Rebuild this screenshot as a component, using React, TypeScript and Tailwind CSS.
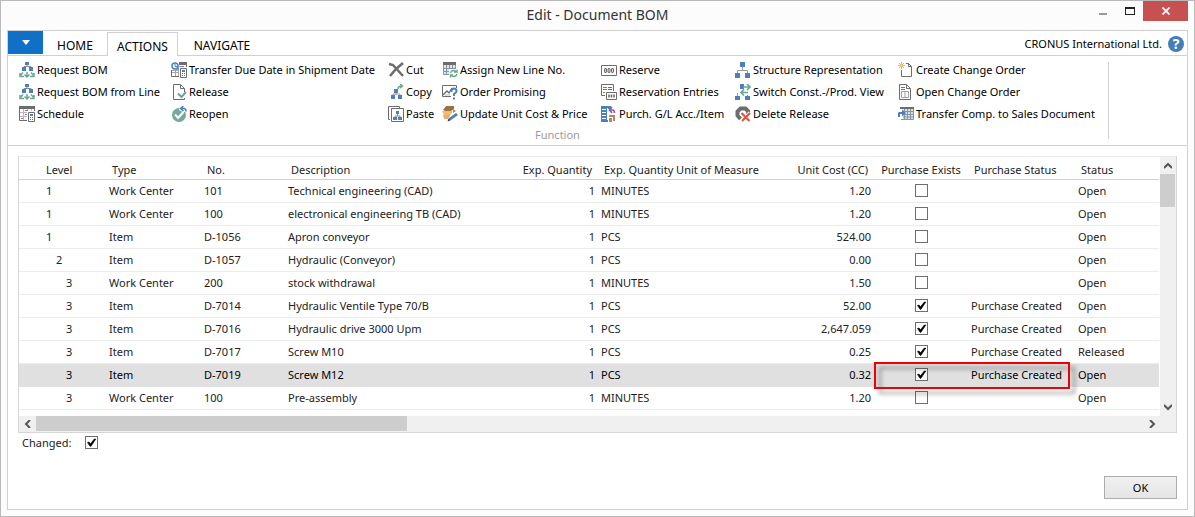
import React from "react";

type IconProps = { children: React.ReactNode; w?: number };

function Svg({ children, w = 16 }: IconProps) {
  return (
    <svg width={w} height="16" viewBox={`0 0 ${w} 16`} fill="none" className="shrink-0" aria-hidden="true">
      {children}
    </svg>
  );
}

const BLUE = "#4a80bd";
const GREEN = "#6aa892";
const GRAY = "#6d6d6d";

const RequestIcon = () => (
  <Svg>
    <path d="M6 0h4v3H6zM3 5h4v4H3zM10 5h4v4h-4z" fill={BLUE} />
    <path d="M8 3v2M5 5V4.500h7V5" stroke="#8b8b8b" />
    <path d="M4 10.500L1 14M8 10v5M12 10.500l3 3.500M1 11v3.500h4M5.500 12.500L8 15l2.500-2.500M15 11v3.500h-4" stroke={GREEN} strokeWidth="1.500" />
  </Svg>
);

const Calculator = () => (
  <>
    <path d="M8 5h8v11H8z" fill="#fff" />
    <path d="M9.500 6.500h6v9h-6z" fill="#fff" stroke={GRAY} />
    <path d="M11 8h3v2h-3z" fill={BLUE} />
    <path d="M11 11.500h1M13 11.500h1M11 13.500h1M13 13.500h1" stroke={GRAY} />
  </>
);

const ScheduleIcon = () => (
  <Svg>
    <path d="M.5 1v13.500H8M15.500 1v4" stroke={GRAY} />
    <path d="M0 0h16v3H0z" fill={GRAY} />
    <path d="M4.500 3v11M8.500 3v3M12.500 3v2M1 6.500h7M1 10.500h7" stroke="#b9b9b9" />
    <path d="M6 4h3v1H6zM2 12h2v1H2zM6 8h2v1H6z" fill="#9a70b5" />
    <Calculator />
  </Svg>
);

const TransferDateIcon = () => (
  <Svg>
    <path d="M.5 8v6.500H8M15.500 1v4" stroke={GRAY} />
    <path d="M8 0h8v3H8z" fill={GRAY} />
    <path d="M4.500 8v6M7.500 7v7M1 10.500h7M1 8.500h7" stroke="#a5a5a5" />
    <path d="M9 4h4v1H9z" fill="#9a70b5" />
    <circle cx="4" cy="4" r="3" fill="#fff" stroke={BLUE} strokeWidth="1.500" />
    <path d="M4 2v2.500h2M5 7h3V4" stroke={BLUE} />
    <Calculator />
  </Svg>
);

const ReleaseIcon = () => (
  <Svg>
    <path d="M13.500 14v1.500h-11V.5h7l4 4V8M9.500.5v4h4" stroke={GRAY} />
    <path d="M6 8h10v6H6z" fill="#fff" />
    <path d="M7 9.500l3.500 3.500L15 8" stroke={GREEN} strokeWidth="2" />
  </Svg>
);

const ReopenIcon = () => (
  <Svg>
    <circle cx="8" cy="9" r="7" fill="#76a998" />
    <path d="M4 8.500l3 3.500 5.500-6" stroke="#fff" strokeWidth="2" />
    <path d="M8 0h8v6h-4L8 4z" fill="#fff" />
    <path d="M12.500 0L9.500 2.500 12.500 5M10 2.500h3q2 0 2 3" stroke={BLUE} strokeWidth="1.500" />
  </Svg>
);

const CutIcon = () => (
  <Svg>
    <path d="M1 2l4 1 10 11M15 1L8 7l-6 7" stroke={GRAY} strokeWidth="2.500" />
  </Svg>
);

const CopyIcon = () => (
  <Svg>
    <path d="M6 5h4v4H6zM3 11h4v4H3zM10 11h4v4h-4z" fill={BLUE} />
    <path d="M8 9v2M5 11v-1h7v1" stroke="#9a9a9a" />
    <path d="M10 5q0-3 4-3M12 0l2.500 2L12 4" stroke={GREEN} strokeWidth="1.500" />
  </Svg>
);

const PasteIcon = () => (
  <Svg>
    <path d="M2 13.500H.5V.5h11V2" stroke={GRAY} />
    <path d="M3.500 2.500h12v13h-12z" fill="#fff" stroke={GRAY} />
    <path d="M8 5h3v3H8zM5 11h4v3H5zM10 11h4v3h-4z" fill={BLUE} />
    <path d="M9.500 8v2M7 11v-1h5v1" stroke="#8b8b8b" />
  </Svg>
);

const AssignIcon = () => (
  <Svg>
    <path d="M1 1h12v12H1z" fill="#e0e6ec" />
    <path d="M1.500 3v9.500H7M4.500 3v9M7.500 3v6M10.500 3v5M13.500 3v4M1 6.500h12M1 9.500h8" stroke="#8694a2" />
    <path d="M1 0h13v3H1z" fill={GRAY} />
    <path d="M7 7h9v9H7z" fill="#fff" />
    <path d="M8.500 11q1-3 4-2.500l2 1.500M15 7.500V10h-3M15 12q-1 3-4 2.500L9 13M8.500 15.500V13H11" stroke={GREEN} strokeWidth="1.400" />
  </Svg>
);

const PromiseIcon = () => (
  <Svg>
    <path d="M9 12.500H.5V1.500h14V4" stroke={GRAY} />
    <path d="M1 11l4-4 2 2 3-5" stroke={GRAY} strokeWidth="1.300" />
    <path d="M3 11h5" stroke="#bbb" />
    <path d="M9.500 8V7q0-2.500 2.500-2.500T14.500 7q0 1.500-2.500 3v2M12 13.500v2" stroke={BLUE} strokeWidth="2" />
  </Svg>
);

const UpdateIcon = () => (
  <Svg>
    <path d="M4 0h8v3l-3 2H3L1 4z" fill="#a07043" />
    <path d="M0 5h10v2L7 9H2z" fill="#f0bd72" />
    <path d="M1 9l8-1-3 5H2z" fill="#e7b068" />
    <path d="M11 3l3 2-3 2z" fill="#bd8751" />
    <path d="M6 15l1-3 7-5 2 2-7 5z" fill={BLUE} />
    <path d="M5.500 15.500l1-3 2 2z" fill="#3e4b59" />
  </Svg>
);

const ReserveIcon = () => (
  <Svg>
    <path d="M.5 3.500h15v10H.5z" stroke={GRAY} />
    <path d="M3 7l1-1h1l1 1v3l-1 1H4l-1-1zM6.500 7l1-1h1l1 1v3l-1 1h-1l-1-1zM10 7l1-1h1l1 1v3l-1 1h-1l-1-1z" fill={GRAY} />
    <path d="M4.500 7v3M8 7v3M11.500 7v3" stroke="#d5d5d5" />
  </Svg>
);

const ReservationIcon = () => (
  <Svg>
    <path d="M4 11.500H.5V.5h12V7" stroke={GRAY} />
    <path d="M2 3.500h4M2 5.500h4M2 8.500h2" stroke="#d35e43" />
    <path d="M7 3.500h4M7 5.500h4" stroke={GRAY} />
    <path d="M5.500 8.500h10v7h-10z" fill="#fff" stroke={GRAY} />
    <path d="M8 10.500v3M10.500 10.500v3M13 10.500v3" stroke={GRAY} strokeWidth="1.600" />
  </Svg>
);

const PurchIcon = () => (
  <Svg>
    <path d="M0 0h10v3H7v13H0z" fill={BLUE} />
    <path d="M1 3.500h4M1 6.500h4M1 9.500h4M1 12.500h4M6.500 2v12" stroke="#fff" />
    <path d="M8 4h3.500q2 0 2 3M11 1L8.500 4 11 7" stroke="#8b60a7" strokeWidth="1.700" />
    <path d="M8 9h6v6h-2v-4H8zM8 12h3v4H8z" fill="#b18762" />
  </Svg>
);

const StructureIcon = () => (
  <Svg>
    <path d="M5 0h5v5H5zM0 11h5v5H0zM10 11h5v5h-5z" fill={BLUE} />
    <path d="M7.500 5v3M2.500 11V8.500h10V11" stroke="#9a9a9a" />
  </Svg>
);

const SwitchIcon = () => (
  <Svg>
    <path d="M5 0h4v5H5zM0 12h5v4H0zM10 12h5v4h-5z" fill={BLUE} />
    <path d="M2.500 12V9M12.500 12v-1" stroke="#9a9a9a" />
    <path d="M8 3h7M12 0l3 3-3 3M6 8.500h7M9 5.500l-3 3 3 3" stroke={GREEN} strokeWidth="1.700" />
  </Svg>
);

const DeleteReleaseIcon = () => (
  <Svg>
    <path d="M13 8V5l-2.500-2.500h-5L2.500 5.500v4L5.500 13" stroke={GRAY} strokeWidth="4" />
    <path d="M6 7l8 8M15 7l-8 8" stroke="#fff" strokeWidth="4" />
    <path d="M6.500 7l8 8M15 7l-8 8" stroke="#df5737" strokeWidth="2.200" />
  </Svg>
);

const CreateIcon = () => (
  <Svg>
    <path d="M8 1.500h2.500l3 3v10h-10V8M10.500 1.500v3h3" stroke={GRAY} />
    <path d="M3.500 0v7M0 3.500h7M1 1l5 5M6 1L1 6" stroke="#e5b567" />
    <path d="M3 3h1v1H3z" fill="#fff" />
  </Svg>
);

const OpenIcon = () => (
  <Svg>
    <path d="M1.500.5h7l4 4v11h-11zM8.500.5v4h4" stroke={GRAY} />
    <path d="M3 3.500h4M3 5.500h4" stroke={BLUE} strokeWidth="1.200" />
    <path d="M3.500 7.500h7v6h-7zM7 8v5" stroke="#a0a0a0" />
  </Svg>
);

const TransferIcon = () => (
  <Svg>
    <path d="M5 3h10v10H5z" fill="#d8e1ea" />
    <path d="M3 13.500h12.500V2.500H3M6.500 2v11M9.500 2v11M12.500 2v11M5 5.500h10M5 8.500h10M5 11h10" stroke="#8795a3" />
    <path d="M2 1h14v2H2z" fill={GRAY} />
    <path d="M0 11V7l1-1h3V3.500L8 7l-4 3.500V8H2v3z" fill={BLUE} />
  </Svg>
);

const ACTION_COLUMNS = [
  [
    ["Request BOM", RequestIcon],
    ["Request BOM from Line", RequestIcon],
    ["Schedule", ScheduleIcon],
  ],
  [
    ["Transfer Due Date in Shipment Date", TransferDateIcon],
    ["Release", ReleaseIcon],
    ["Reopen", ReopenIcon],
  ],
  [
    ["Cut", CutIcon],
    ["Copy", CopyIcon],
    ["Paste", PasteIcon],
  ],
  [
    ["Assign New Line No.", AssignIcon],
    ["Order Promising", PromiseIcon],
    ["Update Unit Cost & Price", UpdateIcon],
  ],
  [
    ["Reserve", ReserveIcon],
    ["Reservation Entries", ReservationIcon],
    ["Purch. G/L Acc./Item", PurchIcon],
  ],
  [
    ["Structure Representation", StructureIcon],
    ["Switch Const.-/Prod. View", SwitchIcon],
    ["Delete Release", DeleteReleaseIcon],
  ],
  [
    ["Create Change Order", CreateIcon],
    ["Open Change Order", OpenIcon],
    ["Transfer Comp. to Sales Document", TransferIcon],
  ],
] as [string, React.FC][][];

type Row = {
  level: 1 | 2 | 3;
  type: string;
  no: string;
  description: string;
  unit: string;
  cost: string;
  purchased?: boolean;
  status: string;
  selected?: boolean;
};

const ROWS: Row[] = [
  { level: 1, type: "Work Center", no: "101", description: "Technical engineering (CAD)", unit: "MINUTES", cost: "1.20", status: "Open" },
  { level: 1, type: "Work Center", no: "100", description: "electronical engineering TB (CAD)", unit: "MINUTES", cost: "1.20", status: "Open" },
  { level: 1, type: "Item", no: "D-1056", description: "Apron conveyor", unit: "PCS", cost: "524.00", status: "Open" },
  { level: 2, type: "Item", no: "D-1057", description: "Hydraulic (Conveyor)", unit: "PCS", cost: "0.00", status: "Open" },
  { level: 3, type: "Work Center", no: "200", description: "stock withdrawal", unit: "MINUTES", cost: "1.50", status: "Open" },
  { level: 3, type: "Item", no: "D-7014", description: "Hydraulic Ventile Type 70/B", unit: "PCS", cost: "52.00", purchased: true, status: "Open" },
  { level: 3, type: "Item", no: "D-7016", description: "Hydraulic drive 3000 Upm", unit: "PCS", cost: "2,647.059", purchased: true, status: "Open" },
  { level: 3, type: "Item", no: "D-7017", description: "Screw M10", unit: "PCS", cost: "0.25", purchased: true, status: "Released" },
  { level: 3, type: "Item", no: "D-7019", description: "Screw M12", unit: "PCS", cost: "0.32", purchased: true, status: "Open", selected: true },
  { level: 3, type: "Work Center", no: "100", description: "Pre-assembly", unit: "MINUTES", cost: "1.20", status: "Open" },
];

const INDENT = { 1: "pl-[27px]", 2: "pl-[37px]", 3: "pl-[47px]" };

function CheckBox({ id, label, checked }: { id?: string; label?: string; checked?: boolean }) {
  return (
    <span className="relative inline-flex size-[13px]">
      <input
        id={id}
        type="checkbox"
        aria-label={label}
        defaultChecked={checked}
        className="peer m-0 size-[13px] appearance-none border border-[#6e6e6e] bg-white"
      />
      <svg viewBox="0 0 13 13" className="pointer-events-none absolute inset-0 hidden size-[13px] peer-checked:block" aria-hidden="true">
        <path d="M2.500 6.500l1.500-.5 1.500 1.800L9.300 3h1.500L6 10.300H5z" fill="#000" stroke="#000" strokeWidth=".6" />
      </svg>
    </span>
  );
}

function Chevron({ d }: { d: string }) {
  return (
    <svg width="8" height="8" viewBox="0 0 8 8" fill="none" aria-hidden="true">
      <path d={d} stroke="#565656" strokeWidth="2" />
    </svg>
  );
}

export default function App() {
  return (
    <div className="flex min-h-screen flex-col border border-[#b9b9b9] bg-[#fcfcfc] px-1.5 pb-1.5 font-['Noto_Sans','Open_Sans',sans-serif] text-[11px] leading-4 text-black">
      <header className="relative flex h-[29px] items-start justify-center">
        <h1 className="pt-1 text-sm leading-5 text-[#333]">Edit - Document BOM</h1>
        <div className="absolute top-0 right-0 flex h-5">
          <button type="button" aria-label="Minimize" className="flex w-7 justify-center pt-3">
            <span className="h-0.5 w-2 bg-[#999]" />
          </button>
          <button type="button" aria-label="Maximize" className="flex w-[26px] justify-center pt-1.5">
            <span className="h-2 w-2.5 border border-t-2 border-[#222]" />
          </button>
          <button type="button" aria-label="Close" className="flex w-[45px] items-center justify-center bg-[#c75050]">
            <svg width="8" height="8" viewBox="0 0 8 8" aria-hidden="true">
              <path d="M.5.5l7 7M7.500.5l-7 7" stroke="#fff" strokeWidth="1.700" />
            </svg>
          </button>
        </div>
      </header>

      <div className="flex grow flex-col border border-[#d0d0d0] bg-white">
        <nav className="flex h-[25px] border-b border-[#d0d0d0]" aria-label="Ribbon tabs">
          <button type="button" aria-label="Application menu" className="flex h-[23px] w-[35px] items-center justify-center bg-[#1070c8]">
            <svg width="8" height="5" viewBox="0 0 8 5" aria-hidden="true">
              <path d="M0 0h8L4 5z" fill="#fff" />
            </svg>
          </button>
          <button type="button" className="w-16 pt-1.5 text-xs">HOME</button>
          <button type="button" className="mt-px h-6 w-[71px] border border-b-0 border-[#d0d0d0] bg-white pt-1 text-xs">ACTIONS</button>
          <button type="button" className="w-[88px] pt-1.5 text-xs">NAVIGATE</button>
          <div className="ml-auto flex items-center gap-1.5 pt-0.5 pr-[3px]">
            <span>CRONUS International Ltd.</span>
            <button type="button" aria-label="Help" className="flex size-4 items-center justify-center rounded-full bg-[#457db9] text-sm leading-4 font-bold text-white">?</button>
          </div>
        </nav>

        <section className="flex border-b border-[#d0d0d0] pb-0.5" aria-label="Function">
          <div className="flex-none pt-[3px] pl-[11px]">
            <div className="grid grid-cols-[152px_217px_54px_159px_134px_163px_210px]">
              {ACTION_COLUMNS.map((column, index) => (
                <div key={index} className="flex flex-col">
                  {column.map(([label, Icon]) => (
                    <button key={label} type="button" className="flex h-[22px] items-center gap-0.5 text-left whitespace-nowrap">
                      <Icon />
                      {label}
                    </button>
                  ))}
                </div>
              ))}
            </div>
            <div className="pt-0.5 pr-3 text-center text-[#9b9b9b]">Function</div>
          </div>
          <div className="mt-1.5 mb-1 w-px bg-[#d0d0d0]" />
        </section>

        <main className="flex grow flex-col px-2.5 pt-2.5 pb-2.5">
          <div className="border border-[#d6d6d6] border-t-[#ececec]">
            <div className="flex">
              <div className="grow pr-px pb-1.5">
                <table className="w-full table-fixed border-collapse text-[#222]">
                  <colgroup>
                    <col className="w-[87px]" />
                    <col className="w-[95px]" />
                    <col className="w-[84px]" />
                    <col />
                    <col className="w-[92px]" />
                    <col className="w-[166px]" />
                    <col className="w-[110px]" />
                    <col className="w-[94px]" />
                    <col className="w-[107px]" />
                    <col className="w-[84px]" />
                  </colgroup>
                  <thead>
                    <tr className="h-[22px] border-b border-[#d0d0d0] text-left whitespace-nowrap *:pt-1 *:font-normal">
                      <th className="pl-[27px]">Level</th>
                      <th className="pl-1.5">Type</th>
                      <th className="pl-1.5">No.</th>
                      <th className="pl-1.5">Description</th>
                      <th className="pr-1.5 text-right">Exp. Quantity</th>
                      <th className="pl-1.5">Exp. Quantity Unit of Measure</th>
                      <th className="pr-1.5 text-right">Unit Cost (CC)</th>
                      <th className="text-center">Purchase Exists</th>
                      <th className="pl-1.5">Purchase Status</th>
                      <th className="pl-1.5">Status</th>
                    </tr>
                  </thead>
                  <tbody>
                    {ROWS.map((row, index) => (
                      <tr
                        key={index}
                        className={
                          row.selected
                            ? "h-[23px] border-b border-[#e0e0e0] bg-[#e0e0e0] whitespace-nowrap text-black"
                            : "h-[23px] border-b border-[#ececec] whitespace-nowrap"
                        }
                      >
                        <td className={INDENT[row.level]}>{row.level}</td>
                        <td className="pl-[3px]">{row.type}</td>
                        <td className="pl-[3px]">{row.no}</td>
                        <td className="pl-[3px]">{row.description}</td>
                        <td className="pr-[3px] text-right">1</td>
                        <td className="pl-[3px]">{row.unit}</td>
                        <td className="pr-[3px] text-right">{row.cost}</td>
                        <td className="relative text-center">
                          <span className="flex justify-center">
                            <CheckBox label={`Purchase exists for line ${index + 1}`} checked={row.purchased} />
                          </span>
                          {row.selected && (
                            <span className="pointer-events-none absolute -top-0.5 left-0 z-10 h-[27px] w-[196px] border-2 border-[#f00000] drop-shadow-[5px_5px_2px_rgba(0,0,0,0.4)]" />
                          )}
                        </td>
                        <td className="pl-[3px]">{row.purchased ? "Purchase Created" : ""}</td>
                        <td className="pl-[3px]">{row.status}</td>
                      </tr>
                    ))}
                  </tbody>
                </table>
              </div>
              <div className="flex w-4 shrink-0 flex-col bg-[#f0f0f0]">
                <button type="button" aria-label="Scroll up" className="flex h-[17px] items-center justify-center">
                  <Chevron d="M0 6l4-4 4 4" />
                </button>
                <div className="mr-px h-[33px] bg-[#cdcdcd]" />
                <button type="button" aria-label="Scroll down" className="mt-auto flex h-[17px] items-center justify-center">
                  <Chevron d="M0 2l4 4 4-4" />
                </button>
              </div>
            </div>
            <div className="flex h-4 bg-[#f0f0f0] pr-4">
              <button type="button" aria-label="Scroll left" className="flex w-[17px] items-center justify-center">
                <Chevron d="M6 0L2 4l4 4" />
              </button>
              <div className="mb-px flex grow">
                <div className="w-[33.5%] bg-[#cdcdcd]" />
              </div>
              <button type="button" aria-label="Scroll right" className="flex w-[17px] items-center justify-center">
                <Chevron d="M2 0l4 4-4 4" />
              </button>
            </div>
          </div>

          <div className="flex items-center gap-3.5 pt-0.5 pl-1 text-[#222]">
            <label htmlFor="changed">Changed:</label>
            <CheckBox id="changed" checked />
          </div>

          <div className="mt-auto flex justify-end">
            <button type="button" className="h-[23px] w-[73px] border border-[#acacac] bg-linear-to-b from-[#f0f0f0] to-[#e5e5e5]">OK</button>
          </div>
        </main>
      </div>
    </div>
  );
}
